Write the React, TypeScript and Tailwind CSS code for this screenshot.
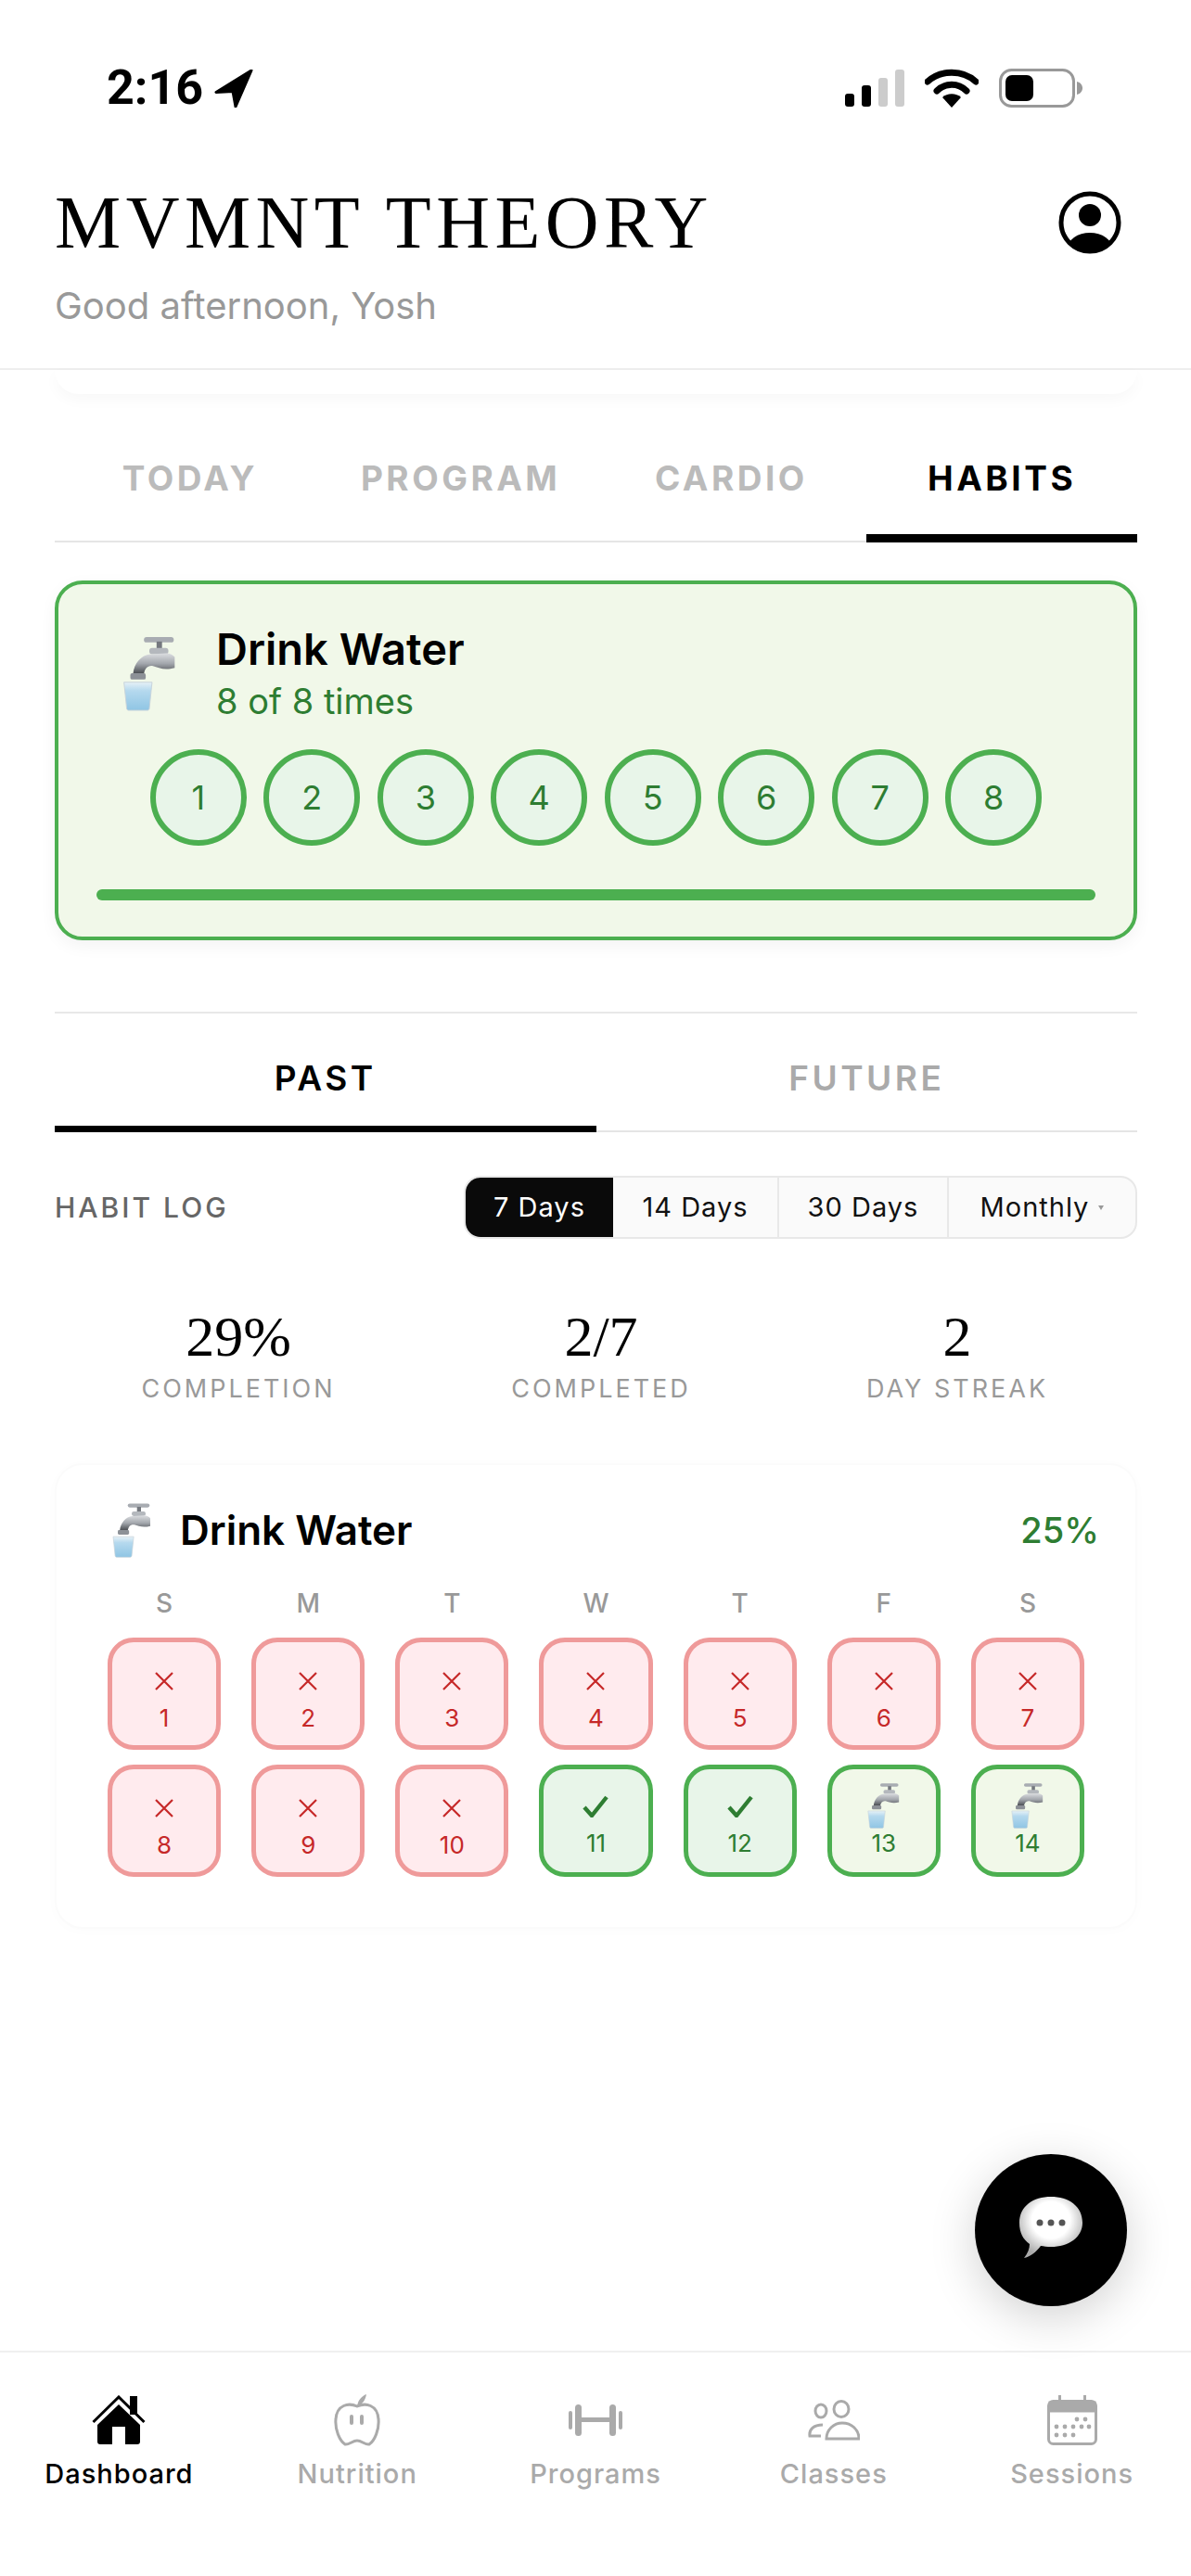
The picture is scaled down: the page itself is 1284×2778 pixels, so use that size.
import React from 'react';

const sans = "[font-family:'Inter',sans-serif]";

// Faucet with glass, used as the habit's icon
const WaterTap = ({ className }: { className: string }) => (
  <svg viewBox="0 0 58 84" className={className}>
    <defs>
      <linearGradient id="tapMetal" x1="0" y1="0" x2="0" y2="1">
        <stop offset="0" stopColor="#dcdee1" />
        <stop offset="0.5" stopColor="#a2a6ac" />
        <stop offset="1" stopColor="#45484d" />
      </linearGradient>
      <linearGradient id="tapGlass" x1="0" y1="0" x2="0" y2="1">
        <stop offset="0" stopColor="#e6f1f7" />
        <stop offset="0.3" stopColor="#b5d9ee" />
        <stop offset="1" stopColor="#8fc5e4" />
      </linearGradient>
    </defs>
    <rect x="23" y="2" width="33" height="6" rx="3" fill="#a8acb2" />
    <rect x="37" y="7" width="6" height="9" fill="#74787e" />
    <rect x="29" y="14" width="21" height="7" rx="3" fill="#b4b8bd" />
    <path d="M57 24V36C46 39 39 36 33 34C27 33 24 37 23 43H11C12 31 20 22 30 21L48 20C52 20 55 22 57 24Z" fill="url(#tapMetal)" />
    <rect x="8" y="42" width="17" height="7" rx="2" fill="#8d9197" />
    <path d="M1 52H32L29 81C29 82 28 83 27 83H6C5 83 4 82 4 81Z" fill="url(#tapGlass)" stroke="#c7d3da" strokeWidth="1" />
  </svg>
);

const StatusBar = () => (
  <div className="flex h-[190px] items-center justify-between pl-[115px] pr-[117px]">
    <div className="flex items-center gap-[12px]">
      <span className="[font-family:'Roboto',sans-serif] text-[52px] font-bold leading-none text-black">2:16</span>
      <svg viewBox="0 0 42 41" className="h-[41px] w-[42px]">
        <path d="M40 1L2 24.5 20 23.5 23 40Z" fill="black" stroke="black" strokeWidth="3" strokeLinejoin="round" />
      </svg>
    </div>
    <div className="flex items-center gap-[22px]">
      <svg viewBox="0 0 64 40" className="h-[40px] w-[64px]">
        <rect x="0" y="26" width="10" height="14" rx="3" fill="black" />
        <rect x="18" y="17" width="10" height="23" rx="3" fill="black" />
        <rect x="36" y="9" width="10" height="31" rx="3" fill="#cccccc" />
        <rect x="54" y="0" width="10" height="40" rx="3" fill="#cccccc" />
      </svg>
      <svg viewBox="0 0 58 42" className="h-[42px] w-[58px]">
        <path d="M3 14C17 1 41 1 55 14" fill="none" stroke="black" strokeWidth="7" strokeLinecap="round" />
        <path d="M13 24C22 15 36 15 45 24" fill="none" stroke="black" strokeWidth="7" strokeLinecap="round" />
        <path d="M29 42L19 31C24 26 34 26 39 31Z" fill="black" />
      </svg>
      <svg viewBox="0 0 90 42" className="h-[42px] w-[90px]">
        <rect x="1.5" y="1.5" width="79" height="39" rx="12" fill="none" stroke="#999999" strokeWidth="3" />
        <rect x="7" y="7" width="30" height="28" rx="7" fill="black" />
        <path d="M84 14C88 15 90 18 90 21C90 24 88 27 84 28Z" fill="#999999" />
      </svg>
    </div>
  </div>
);

const Header = () => (
  <header className="border-b-2 border-[#eeeeee] pb-[27px]">
    <StatusBar />
    <div className="flex h-[100px] items-center justify-between pl-[59px] pr-[75px]">
      <h1 className="[font-family:'Liberation_Serif',serif] text-[80px] font-normal leading-none tracking-[5.5px] text-black">MVMNT THEORY</h1>
      <svg viewBox="0 0 68 68" className="h-[68px] w-[68px]">
        <defs>
          <clipPath id="profileClip"><circle cx="34" cy="34" r="31" /></clipPath>
        </defs>
        <circle cx="34" cy="34" r="31" fill="none" stroke="black" strokeWidth="5" />
        <circle cx="34" cy="26" r="12" fill="black" />
        <ellipse cx="34" cy="62" rx="24" ry="17" fill="black" clipPath="url(#profileClip)" />
      </svg>
    </div>
    <p className={`${sans} h-[80px] pl-[59px] text-[40px] leading-[80px] text-[#999999]`}>Good afternoon, Yosh</p>
  </header>
);

const topTabs = ['TODAY', 'PROGRAM', 'CARDIO', 'HABITS'];

const TopTabs = () => (
  <div className="ml-[59px] mr-[58px] mt-[24px] flex border-b-2 border-[#e5e5e5]">
    {topTabs.map((tab) => (
      <div
        key={tab}
        className={`${sans} -mb-[2px] flex h-[136px] flex-1 items-center justify-center border-b-[9px] pt-[6px] text-[37px] font-bold tracking-[3.5px] ${
          tab === 'HABITS' ? 'border-black text-black' : 'border-transparent text-[#bbbbbb]'
        }`}
      >
        {tab}
      </div>
    ))}
  </div>
);

const HabitCard = () => (
  <section className="ml-[59px] mr-[58px] mt-[41px] rounded-[30px] border-4 border-[#4caf50] bg-[#f1f8e9] px-[41px] pb-[39px] pt-[44px] shadow-[0_6px_18px_rgba(0,0,0,0.05)]">
    <div className="flex items-center">
      <WaterTap className="ml-[24px] h-[82px] w-[66px]" />
      <div className="ml-[39px]">
        <div className={`${sans} text-[47px] font-semibold leading-[52px] text-black`}>Drink Water</div>
        <div className={`${sans} mt-[8px] text-[38px] leading-[44px] text-[#2e7d32]`}>8 of 8 times</div>
      </div>
    </div>
    <div className="mt-[30px] flex justify-center gap-[18.5px]">
      {[1, 2, 3, 4, 5, 6, 7, 8].map((n) => (
        <div key={n} className={`${sans} flex h-[104px] w-[104px] items-center justify-center rounded-full border-[6px] border-[#4caf50] bg-[#e8f5e9] text-[36px] text-[#2e7d32]`}>
          {n}
        </div>
      ))}
    </div>
    <div className="mt-[47px] h-[12px] rounded-full bg-[#4caf50]" />
  </section>
);

const PastFutureTabs = () => (
  <div className="ml-[59px] mr-[58px] mt-[77px] border-t-2 border-[#e8e8e8]">
    <div className="flex border-b-2 border-[#e5e5e5]">
      <div className={`${sans} -mb-[2px] h-[128px] flex-1 border-b-[7px] border-black pt-[47px] text-center text-[37px] font-semibold leading-[46px] tracking-[3.5px] text-black`}>PAST</div>
      <div className={`${sans} -mb-[2px] h-[128px] flex-1 border-b-[7px] border-transparent pt-[47px] text-center text-[37px] font-semibold leading-[46px] tracking-[3.5px] text-[#aaaaaa]`}>FUTURE</div>
    </div>
  </div>
);

const ranges = [
  { label: '7 Days', width: 'w-[159px]' },
  { label: '14 Days', width: 'w-[179px]' },
  { label: '30 Days', width: 'w-[183px]' },
];

const LogControls = () => (
  <div className="ml-[59px] mr-[58px] mt-[47px] flex items-center justify-between">
    <span className={`${sans} text-[30px] font-medium tracking-[3px] text-[#666666]`}>HABIT LOG</span>
    <div className={`${sans} flex h-[68px] items-stretch overflow-hidden rounded-[18px] border-2 border-[#e8e8e8] bg-[#fafafa] text-[29px] tracking-[1px] text-[#111111]`}>
      {ranges.map((r, i) => (
        <div key={r.label} className={`flex items-center justify-center ${r.width} ${i === 0 ? 'bg-[#0a0a0a] text-white' : 'border-r-2 border-[#e8e8e8]'}`}>
          {r.label}
        </div>
      ))}
      <div className="flex w-[201px] items-center justify-center gap-[10px]">
        Monthly
        <span className="h-0 w-0 border-x-[3px] border-t-[5px] border-x-transparent border-t-[#999999]" />
      </div>
    </div>
  </div>
);

const stats = [
  { value: '29%', label: 'COMPLETION' },
  { value: '2/7', label: 'COMPLETED' },
  { value: '2', label: 'DAY STREAK' },
];

const Stats = () => (
  <div className="ml-[63px] mt-[70px] grid grid-cols-[388px_394px_374px]">
    {stats.map((s) => (
      <div key={s.label} className="text-center">
        <div className="[font-family:'Liberation_Serif',serif] text-[62px] leading-[70px] text-black">{s.value}</div>
        <div className={`${sans} mt-[7px] text-[27px] leading-[30px] tracking-[3px] text-[#999999]`}>{s.label}</div>
      </div>
    ))}
  </div>
);

const CrossMark = () => (
  <svg viewBox="0 0 20 20" className="h-[20px] w-[20px]">
    <path d="M1 1L19 19M19 1L1 19" stroke="#c62828" strokeWidth="2.2" fill="none" />
  </svg>
);

const CheckMark = () => (
  <svg viewBox="0 0 28 24" className="h-[24px] w-[28px]">
    <path d="M2 13L10 22L26 2" stroke="#2e7d32" strokeWidth="4.4" fill="none" />
  </svg>
);

type DayState = 'missed' | 'done' | 'full';

const days: { n: number; state: DayState }[] = [
  ...[1, 2, 3, 4, 5, 6, 7, 8, 9, 10].map((n) => ({ n, state: 'missed' as DayState })),
  { n: 11, state: 'done' },
  { n: 12, state: 'done' },
  { n: 13, state: 'full' },
  { n: 14, state: 'full' },
];

const DayCell = ({ n, state }: { n: number; state: DayState }) => {
  if (state === 'missed') {
    return (
      <div className="flex h-[121px] flex-col items-center rounded-[28px] border-[5px] border-[#ef9a9a] bg-[#ffebee] pt-[32px] text-[#c62828]">
        <CrossMark />
        <span className={`${sans} mt-[15px] text-[26px] leading-[30px]`}>{n}</span>
      </div>
    );
  }
  if (state === 'done') {
    return (
      <div className="flex h-[121px] flex-col items-center rounded-[28px] border-[5px] border-[#4caf50] bg-[#e8f5e9] pt-[28px] text-[#2e7d32]">
        <CheckMark />
        <span className={`${sans} mt-[13px] text-[26px] leading-[30px]`}>{n}</span>
      </div>
    );
  }
  return (
    <div className="flex h-[121px] flex-col items-center rounded-[28px] border-[5px] border-[#4caf50] bg-[#f1f8e9] pt-[14px] text-[#2e7d32]">
      <WaterTap className="h-[50px] w-[37px]" />
      <span className={`${sans} mt-[1px] text-[26px] leading-[30px]`}>{n}</span>
    </div>
  );
};

const HabitLogCard = () => (
  <section className="ml-[59px] mr-[58px] mt-[65px] rounded-[30px] border-2 border-[#fbfbfb] bg-white px-[55px] pb-[54px] pt-[40px] shadow-[0_2px_14px_rgba(0,0,0,0.015)]">
    <div className="-mr-[16px] flex h-[60px] items-center justify-between">
      <div className="flex items-center">
        <WaterTap className="ml-[3px] h-[60px] w-[46px]" />
        <span className={`${sans} ml-[29px] text-[44px] font-semibold text-black`}>Drink Water</span>
      </div>
      <span className={`${sans} text-[38px] font-medium text-[#2e7d32]`}>25%</span>
    </div>
    <div className={`${sans} mt-[31px] grid grid-cols-7 gap-x-[33px] text-center text-[28px] font-medium leading-[36px] text-[#999999]`}>
      {['S', 'M', 'T', 'W', 'T', 'F', 'S'].map((d, i) => (
        <div key={i}>{d}</div>
      ))}
    </div>
    <div className="mt-[19px] grid grid-cols-7 gap-x-[33px] gap-y-[16px]">
      {days.map((d) => (
        <DayCell key={d.n} n={d.n} state={d.state} />
      ))}
    </div>
  </section>
);

const HomeIcon = () => (
  <svg viewBox="0 0 58 54" className="h-[54px] w-[58px]">
    <rect x="41" y="1" width="8" height="20" fill="black" />
    <path d="M1.5 29L29 2L56.5 29" fill="none" stroke="black" strokeWidth="3" />
    <path d="M29 10L52 32V50C52 52 51 53 49 53H36V34H22V53H9C7 53 6 52 6 50V32Z" fill="black" />
  </svg>
);

const AppleIcon = () => (
  <svg viewBox="0 0 50 56" className="h-[56px] w-[50px]" fill="none" stroke="#aaaaaa" strokeWidth="3">
    <path d="M25 13C16 9 3 11 2 27C1 38 6 50 12 54C16 55 20 50 25 50C30 50 34 55 38 54C44 50 49 38 48 27C47 11 34 9 25 13Z" />
    <path d="M25 13C26 6 30 2 35 0C34 6 31 11 25 13Z" fill="#aaaaaa" stroke="none" />
    <path d="M19 24V31M30 24V31" strokeWidth="4" strokeLinecap="round" />
  </svg>
);

const DumbbellIcon = () => (
  <svg viewBox="0 0 58 34" className="h-[34px] w-[58px]" fill="#aaaaaa">
    <rect x="0" y="7" width="4" height="20" rx="2" />
    <rect x="7" y="0" width="7" height="34" rx="3.5" />
    <rect x="14" y="14" width="30" height="5" />
    <rect x="44" y="0" width="7" height="34" rx="3.5" />
    <rect x="54" y="7" width="4" height="20" rx="2" />
  </svg>
);

const PeopleIcon = () => (
  <svg viewBox="0 0 56 44" className="h-[44px] w-[56px]" fill="none" stroke="#aaaaaa" strokeWidth="3">
    <ellipse cx="14" cy="12" rx="6" ry="7" />
    <ellipse cx="36" cy="10" rx="8" ry="8.5" />
    <path d="M20 42H55C55 32 47 25 37 25C28 25 20 32 20 42Z" />
    <path d="M14 39H2C1 32 6 27 16 27" />
  </svg>
);

const CalendarIcon = () => (
  <svg viewBox="0 0 54 54" className="h-[54px] w-[54px]">
    <rect x="1.5" y="6.5" width="51" height="46" rx="5" fill="none" stroke="#aaaaaa" strokeWidth="3" />
    <rect x="1.5" y="6.5" width="51" height="12" fill="#aaaaaa" />
    <rect x="12" y="0" width="3" height="8" fill="#aaaaaa" />
    <rect x="39" y="0" width="3" height="8" fill="#aaaaaa" />
    {[
      [32, 26], [41, 26],
      [10, 34], [19, 34], [28, 34], [37, 34], [45, 34],
      [10, 43], [19, 43], [28, 43],
    ].map(([cx, cy]) => (
      <circle key={`${cx}-${cy}`} cx={cx} cy={cy} r="2.4" fill="#aaaaaa" />
    ))}
  </svg>
);

const navItems = [
  { label: 'Dashboard', icon: <HomeIcon /> },
  { label: 'Nutrition', icon: <AppleIcon /> },
  { label: 'Programs', icon: <DumbbellIcon /> },
  { label: 'Classes', icon: <PeopleIcon /> },
  { label: 'Sessions', icon: <CalendarIcon /> },
];

const BottomNav = () => (
  <nav className="mt-auto grid h-[243px] grid-cols-5 border-t-2 border-[#f0f0f0] bg-white pt-[45px]">
    {navItems.map((item, i) => (
      <div key={item.label} className="flex flex-col items-center">
        <div className="flex h-[56px] items-center justify-center">{item.icon}</div>
        <span className={`${sans} mt-[15px] text-[29px] font-medium leading-[30px] tracking-[1px] ${i === 0 ? 'text-black' : 'text-[#aaaaaa]'}`}>{item.label}</span>
      </div>
    ))}
  </nav>
);

const ChatButton = () => (
  <button className="absolute bottom-[291px] right-[69px] flex h-[164px] w-[164px] items-center justify-center rounded-full bg-black shadow-[0_12px_50px_rgba(0,0,0,0.18)]">
    <svg viewBox="0 0 70 70" className="-mt-[6px] h-[70px] w-[70px]">
      <defs>
        <radialGradient id="bubbleFill" cx="0.5" cy="0.38" r="0.6">
          <stop offset="0.5" stopColor="#ffffff" />
          <stop offset="1" stopColor="#aaaaaa" />
        </radialGradient>
      </defs>
      <path d="M6 68C10 63 12 58 12 53C5 48 1 41 1 30C1 12 16 2 35 2C54 2 69 12 69 30C69 46 54 56 35 56C31 56 27 55.5 24 55C19 62 12 67 6 68Z" fill="url(#bubbleFill)" />
      <circle cx="23" cy="30" r="3.5" fill="#555555" />
      <circle cx="35" cy="30" r="3.5" fill="#555555" />
      <circle cx="47" cy="30" r="3.5" fill="#555555" />
    </svg>
  </button>
);

const App: React.FC = () => {
  return (
    <div className="relative flex h-[2778px] w-[1284px] flex-col overflow-hidden bg-white">
      <Header />
      <div className="ml-[59px] mr-[58px] h-[26px] rounded-b-[30px] bg-white shadow-[0_6px_16px_rgba(0,0,0,0.03)]" />
      <TopTabs />
      <HabitCard />
      <PastFutureTabs />
      <LogControls />
      <Stats />
      <HabitLogCard />
      <ChatButton />
      <BottomNav />
    </div>
  );
};

export default App;
